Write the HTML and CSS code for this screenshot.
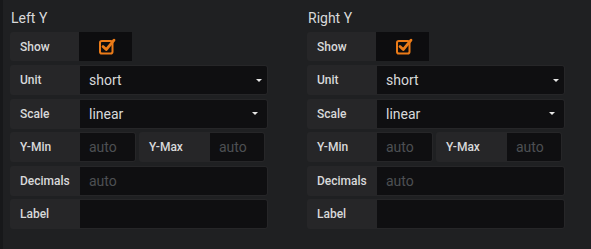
FILE: index.html
```html
<!DOCTYPE html>
<html lang="en">
<head>
  <meta charset="UTF-8" />
  <meta name="viewport" content="width=device-width, initial-scale=1.0"/>
  <title>Axes</title>
  <link rel="stylesheet" href="styles.css">
</head>
<body>
  <div class="axes">

    <div class="section">
      <h5 class="section-heading">Left Y</h5>

      <div class="form-row">
        <label class="form-label w-show">Show</label>
        <div class="check-box">
          <svg width="18" height="18" viewBox="0 0 18 18">
            <rect x="2" y="4" width="12.5" height="12.5" rx="1.8" fill="none" stroke="#eb7b18" stroke-width="2"/>
            <path d="M5 9.6 L8.2 12.6 L16 3.2" fill="none" stroke="#eb7b18" stroke-width="2.8" stroke-linecap="round" stroke-linejoin="round"/>
          </svg>
        </div>
      </div>

      <div class="form-row">
        <label class="form-label">Unit</label>
        <div class="form-input select">short<span class="caret"></span></div>
      </div>

      <div class="form-row">
        <label class="form-label">Scale</label>
        <div class="form-input select">linear<span class="caret caret-in"></span></div>
      </div>

      <div class="form-row">
        <label class="form-label">Y-Min</label>
        <div class="form-input small placeholder">auto</div>
        <label class="form-label w-max">Y-Max</label>
        <div class="form-input small placeholder">auto</div>
      </div>

      <div class="form-row">
        <label class="form-label">Decimals</label>
        <div class="form-input placeholder">auto</div>
      </div>

      <div class="form-row">
        <label class="form-label">Label</label>
        <div class="form-input"></div>
      </div>
    </div>

    <div class="section">
      <h5 class="section-heading">Right Y</h5>

      <div class="form-row">
        <label class="form-label w-show">Show</label>
        <div class="check-box">
          <svg width="18" height="18" viewBox="0 0 18 18">
            <rect x="2" y="4" width="12.5" height="12.5" rx="1.8" fill="none" stroke="#eb7b18" stroke-width="2"/>
            <path d="M5 9.6 L8.2 12.6 L16 3.2" fill="none" stroke="#eb7b18" stroke-width="2.8" stroke-linecap="round" stroke-linejoin="round"/>
          </svg>
        </div>
      </div>

      <div class="form-row">
        <label class="form-label">Unit</label>
        <div class="form-input select">short<span class="caret"></span></div>
      </div>

      <div class="form-row">
        <label class="form-label">Scale</label>
        <div class="form-input select">linear<span class="caret caret-in"></span></div>
      </div>

      <div class="form-row">
        <label class="form-label">Y-Min</label>
        <div class="form-input small placeholder">auto</div>
        <label class="form-label w-max">Y-Max</label>
        <div class="form-input small placeholder">auto</div>
      </div>

      <div class="form-row">
        <label class="form-label">Decimals</label>
        <div class="form-input placeholder">auto</div>
      </div>

      <div class="form-row">
        <label class="form-label">Label</label>
        <div class="form-input"></div>
      </div>
    </div>

  </div>
</body>
</html>
```

FILE: styles.css
```css
body {
  margin: 0;
  min-height: 249px;
  background-color: #1f2022;
  border-left: 3px solid #17181a;
  font-family: Roboto, "Liberation Sans", sans-serif;
  color: #d8d9da;
}

.axes {
  display: flex;
  gap: 39px;
  padding: 10px 0 0 7px;
}

.section {
  width: 258px;
}

.section-heading {
  margin: 0 0 6px 1px;
  font-size: 14px;
  line-height: 16px;
  font-weight: normal;
  color: #d8d9da;
}

.form-row {
  display: flex;
  height: 30px;
  margin-bottom: 3.4px;
}

.form-label {
  display: flex;
  align-items: center;
  box-sizing: border-box;
  width: 70px;
  flex: none;
  padding-left: 10px;
  background-color: #262628;
  border-radius: 3px 0 0 3px;
  font-size: 12px;
  font-weight: 500;
  color: #d8d9da;
}

.form-label.w-show {
  width: 69px;
  height: 29px;
}

.form-label.w-max {
  width: 71px;
  margin-left: 3px;
}

.check-box {
  display: flex;
  align-items: center;
  justify-content: center;
  width: 53px;
  height: 29px;
  background-color: #0d0d0f;
}

.check-box svg {
  margin-left: 3px;
  margin-top: -1px;
}

.form-input {
  display: flex;
  align-items: center;
  box-sizing: border-box;
  flex: 1;
  padding-left: 9px;
  background-color: #0f0f11;
  border: 1px solid #262628;
  border-left: none;
  border-radius: 0 3px 3px 0;
  font-size: 14px;
  color: #d8d9da;
}

.form-input.small {
  flex: none;
  width: 56px;
}

.form-input.small:last-child {
  width: 55px;
}

.placeholder {
  color: #4d4f53;
}

.select {
  padding-right: 5px;
}

.caret {
  margin-left: auto;
  width: 0;
  height: 0;
  border-left: 3px solid transparent;
  border-right: 3px solid transparent;
  border-top: 3px solid #e6e6e6;
}

.caret-in {
  margin-right: 4px;
}
```
